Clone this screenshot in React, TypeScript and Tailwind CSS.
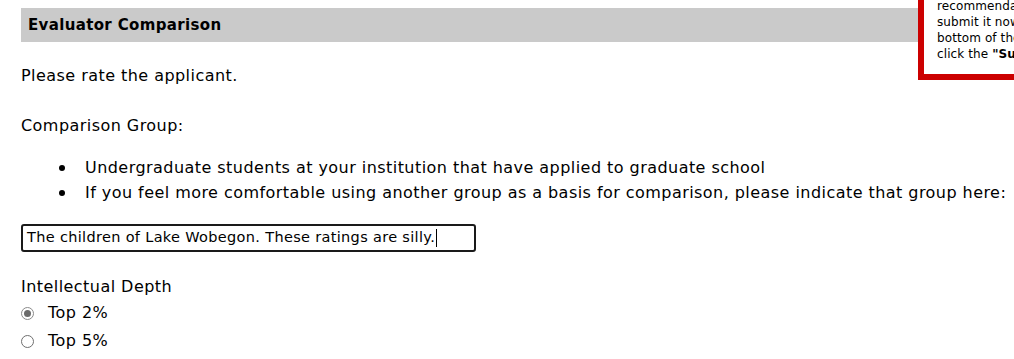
const font = { fontFamily: '"DejaVu Sans", "Open Sans", sans-serif' };

function Radio({ checked, label }: { checked?: boolean; label: string }) {
  return (
    <div className="flex h-[28px] items-center">
      <span
        className={`flex h-[13px] w-[13px] items-center justify-center rounded-full border bg-white ${
          checked ? "border-[#8a8a8a]" : "border-[#6f6f6f]"
        }`}
      >
        {checked && <span className="h-[7px] w-[7px] rounded-full bg-[#6b6b6b]" />}
      </span>
      <span className="ml-[14px] text-[16px] tracking-[0.45px] text-black">{label}</span>
    </div>
  );
}

export default function App() {
  return (
    <div className="relative h-[359px] w-[1014px] overflow-hidden bg-white text-black" style={font}>
      <div className="pl-[21px]">
        {/* section header */}
        <div className="mt-[8px] flex h-[34px] w-[1000px] items-center bg-[#cacaca] pl-[7px] text-[15px] font-bold tracking-[0.35px]">
          Evaluator Comparison
        </div>

        <div className="text-[16px] tracking-[0.45px]">
          <p className="mt-[22px] leading-[24px]">Please rate the applicant.</p>
          <p className="mt-[26px] leading-[24px]">Comparison Group:</p>

          <ul className="mt-[17px] leading-[25px]">
            <li className="flex items-center whitespace-nowrap">
              <span className="ml-[38px] h-[6px] w-[6px] rounded-full bg-black" />
              <span className="ml-[20px]">Undergraduate students at your institution that have applied to graduate school</span>
            </li>
            <li className="flex items-center whitespace-nowrap">
              <span className="ml-[38px] h-[6px] w-[6px] rounded-full bg-black" />
              <span className="ml-[20px]">
                If you feel more comfortable using another group as a basis for comparison, please indicate that group here:
              </span>
            </li>
          </ul>
        </div>

        <div className="mt-[19px] flex h-[28px] w-[455px] items-center rounded-[3px] border-2 border-[#1a1a1a] pl-[4px] text-[14.5px] tracking-[0.33px] whitespace-nowrap">
          The children of Lake Wobegon. These ratings are silly.
          <span className="ml-[1px] h-[18px] w-[1px] bg-black" />
        </div>

        <p className="mt-[23px] text-[16px] leading-[24px] tracking-[0.45px]">Intellectual Depth</p>
        <Radio checked label="Top 2%" />
        <Radio label="Top 5%" />
        <Radio label="Top 10%" />
      </div>

      {/* floating reminder box */}
      <div className="absolute left-[918px] top-[-36px] w-[240px] border-[6px] border-[#cc0000] bg-white py-[12px] pl-[13px] text-[12px] leading-[16px] tracking-[0.1px] whitespace-nowrap">
        <div>Once you have finished your</div>
        <div>recommendation, you may</div>
        <div>submit it now by scrolling to the</div>
        <div>bottom of the page and</div>
        <div>
          click the <b>"Submit"</b> button.
        </div>
      </div>
    </div>
  );
}
